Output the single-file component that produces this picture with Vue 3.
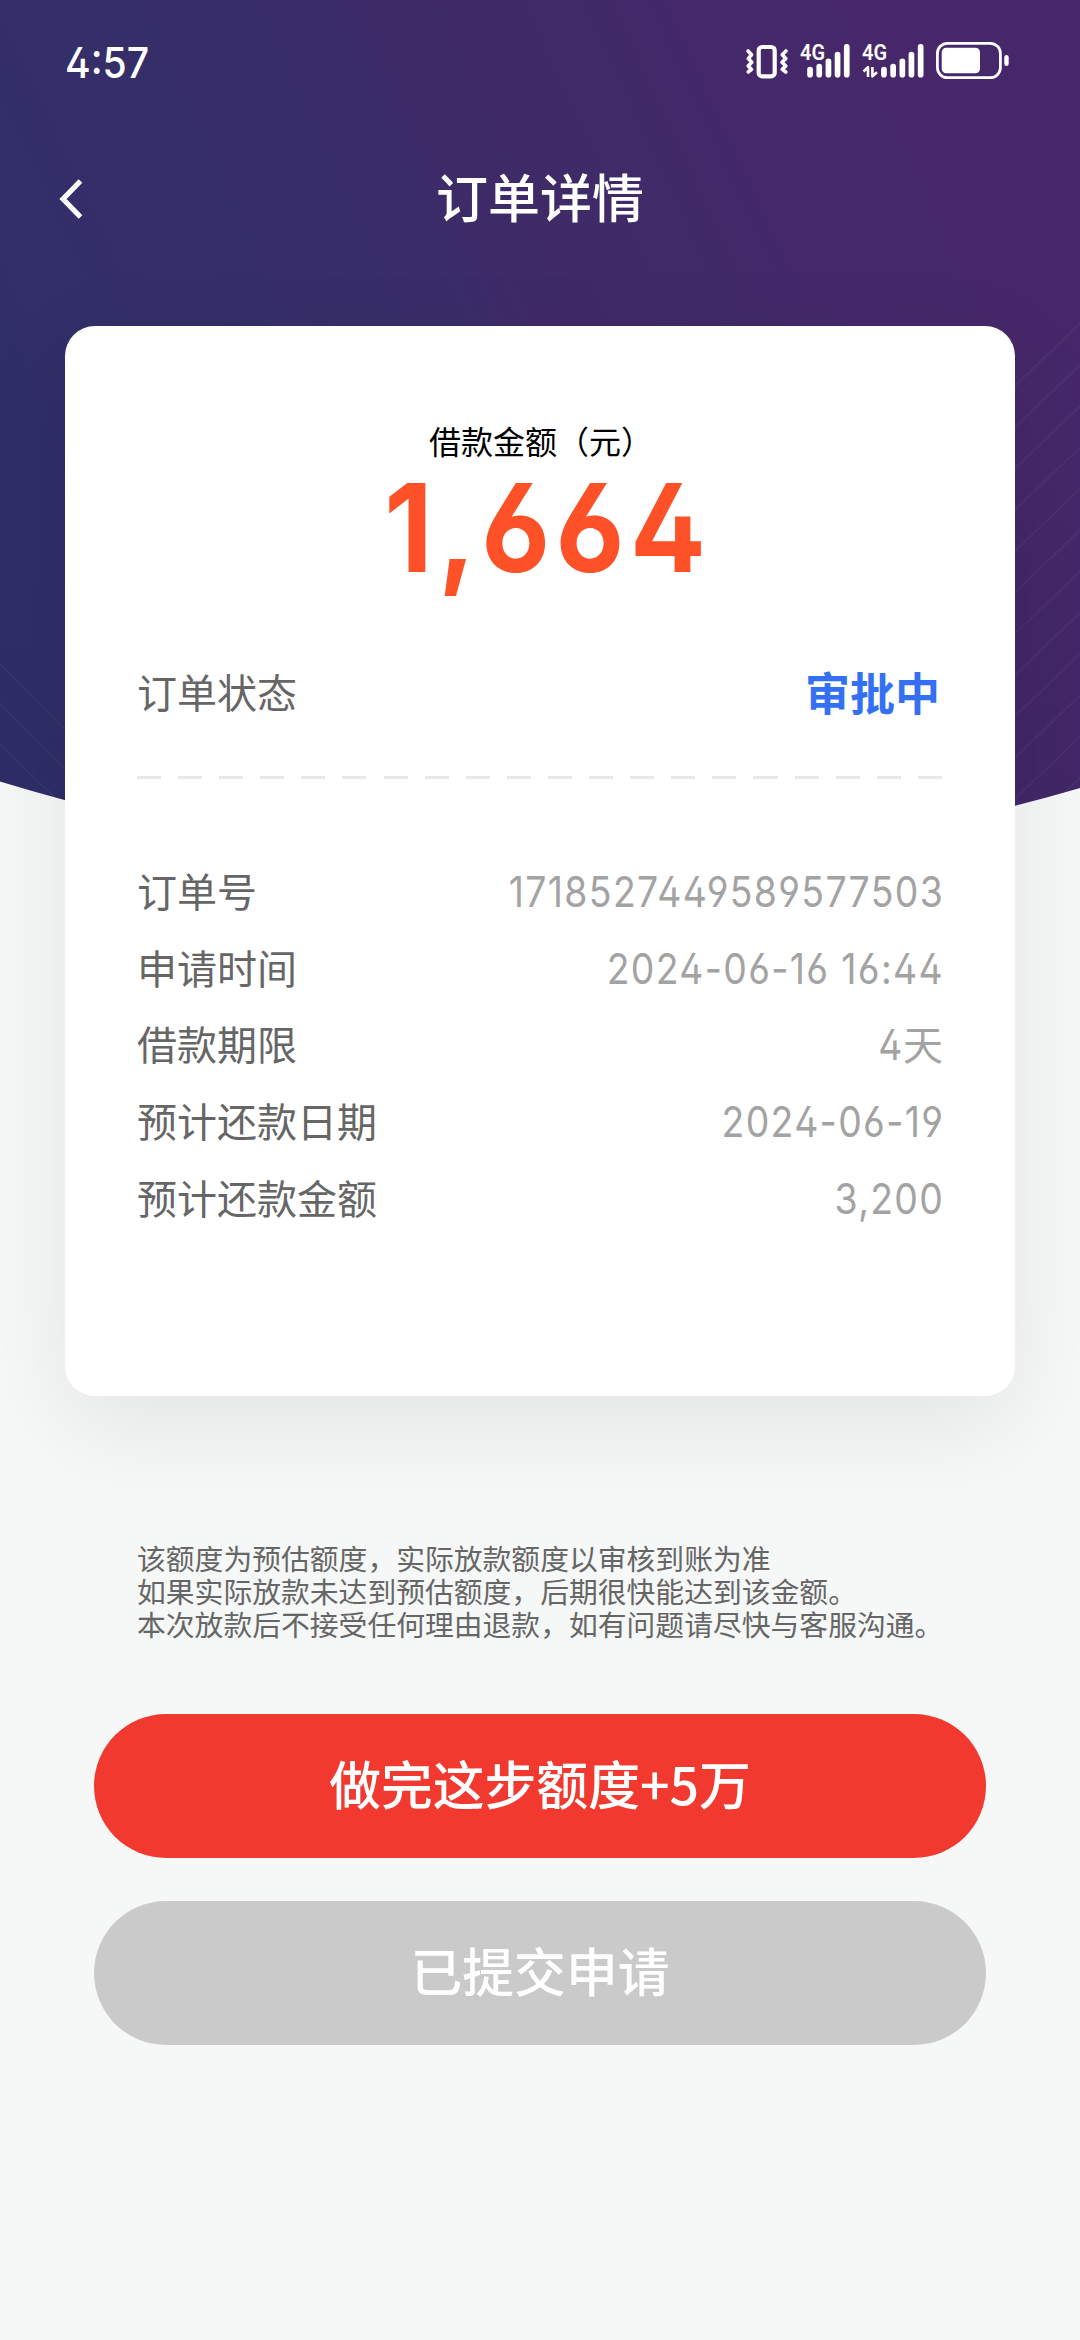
<script setup>
const details = [
  { label: '订单号', value: '1718527449589577503' },
  { label: '申请时间', value: '2024-06-16 16:44' },
  { label: '借款期限', value: '4', unit: '天' },
  { label: '预计还款日期', value: '2024-06-19' },
  { label: '预计还款金额', value: '3,200' },
]

const notices = [
  '该额度为预估额度，实际放款额度以审核到账为准',
  '如果实际放款未达到预估额度，后期很快能达到该金额。',
  '本次放款后不接受任何理由退款，如有问题请尽快与客服沟通。',
]

const stripes = Array.from({ length: 12 }, (_, i) => 386 + i * 41.3)
const bars = [
  { x: 0, y: 46.7 },
  { x: 9.2, y: 43.7 },
  { x: 18.4, y: 38.4 },
  { x: 27.5, y: 31.7 },
  { x: 36.7, y: 24 },
]
</script>

<template>
  <div class="page">
    <svg class="backdrop" viewBox="0 0 1080 880" aria-hidden="true">
      <defs>
        <linearGradient id="sky" gradientUnits="userSpaceOnUse" x1="60" y1="560" x2="960" y2="140">
          <stop offset="0" stop-color="#302f69" />
          <stop offset="0.47" stop-color="#392d69" />
          <stop offset="0.54" stop-color="#3f2a68" />
          <stop offset="0.7" stop-color="#402a68" />
          <stop offset="0.82" stop-color="#45286a" />
          <stop offset="1" stop-color="#46286a" />
        </linearGradient>
        <linearGradient id="shade" x1="0" y1="0" x2="0" y2="1">
          <stop offset="0.35" stop-color="#201850" stop-opacity="0" />
          <stop offset="1" stop-color="#201850" stop-opacity="0.1" />
        </linearGradient>
        <clipPath id="dome"><path d="M0 0H1080V788Q540 946 0 781.5Z" /></clipPath>
      </defs>
      <g clip-path="url(#dome)">
        <rect width="1080" height="880" fill="url(#sky)" />
        <rect width="1080" height="880" fill="url(#shade)" />
        <g fill="none" stroke="#fff" stroke-opacity="0.045" stroke-width="1.6">
          <path v-for="y in stripes" :key="y" :d="`M1005 ${y + 9.5}L1090 ${y - 72}`" />
          <path d="M0 664Q36 700 70 735M0 703Q36 742 70 773M0 743Q26 771 58 800" />
        </g>
      </g>
    </svg>

    <div class="statusbar">
      <span class="time num">4:57</span>
      <svg class="icons" width="280" height="80" viewBox="20 0 280 80" fill="#fff" aria-hidden="true">
        <rect x="38.7" y="27" width="16" height="29.4" rx="3.5" fill="none" stroke="#fff" stroke-width="4.2" />
        <g fill="none" stroke="#fff" stroke-width="3.6" stroke-linecap="round" stroke-linejoin="round">
          <path d="M28 31l3.6 3.8-3.4 3.8 3.6 3.7-3.6 3.7 3.4 3.4-3.4 2.6" />
          <path d="M66 31l-3.8 3.8 3.6 3.8-3.8 3.7 3.8 3.7-3.6 3.4 3.6 2.6" />
        </g>
        <text class="net" x="80" y="40.3" textLength="25" lengthAdjust="spacingAndGlyphs">4G</text>
        <rect v-for="b in bars" :key="'a' + b.x" :x="87.2 + b.x" :y="b.y" width="5.7" :height="57.5 - b.y" rx="2.8" />
        <text class="net" x="142" y="40.3" textLength="25" lengthAdjust="spacingAndGlyphs">4G</text>
        <rect v-for="b in bars" :key="'b' + b.x" :x="161.1 + b.x" :y="b.y" width="5.7" :height="57.5 - b.y" rx="2.8" />
        <path d="M143.5 51.5L148 47.2V57M157 52.2L152.4 56.3V47" fill="none" stroke="#fff" stroke-width="2.6" stroke-linejoin="round" />
        <rect x="217.4" y="23.4" width="63" height="34.2" rx="10" fill="none" stroke="#fff" stroke-width="2.8" />
        <rect x="221.7" y="27.7" width="38.3" height="25.6" rx="4.5" />
        <rect x="284.3" y="35" width="4.4" height="11" rx="2.2" />
      </svg>
    </div>

    <header class="navbar">
      <svg class="back" width="30" height="44" viewBox="0 0 30 44" fill="none" stroke="#fff" stroke-width="5.2">
        <path d="M24.5 4L7 22L24.5 40" />
      </svg>
      <h1>订单详情</h1>
    </header>

    <section class="card">
      <p class="caption">借款金额（元）</p>
      <p class="amount"><span class="num">1,664</span></p>
      <div class="row status">
        <span>订单状态</span>
        <strong>审批中</strong>
      </div>
      <div class="divider"></div>
      <div v-for="d in details" :key="d.label" class="row">
        <span>{{ d.label }}</span>
        <span class="value"><span class="num">{{ d.value }}</span>{{ d.unit }}</span>
      </div>
    </section>

    <div class="notice">
      <p v-for="n in notices" :key="n">{{ n }}</p>
    </div>

    <div class="actions">
      <button class="primary">做完这步额度+5万</button>
      <button class="disabled">已提交申请</button>
    </div>
  </div>
</template>

<style>
body {
  background: #f5f8f7;
}
</style>

<style scoped>
.page {
  position: relative;
  width: 1080px;
  height: 2340px;
  overflow: hidden;
  background: #f5f8f7;
  font-family: "Noto Sans CJK SC", "Noto Sans", sans-serif;
}
p,
h1 {
  margin: 0;
}
.backdrop {
  position: absolute;
  top: 0;
  left: 0;
  width: 1080px;
  height: 880px;
}
.num {
  display: inline-block;
  font-family: Inter, "Noto Sans", sans-serif;
  font-feature-settings: "cv02", "cv03", "cv04";
}
.statusbar {
  position: relative;
  display: flex;
  justify-content: space-between;
  align-items: center;
  height: 84px;
  padding: 20px 60px 20px 65px;
  color: #fff;
}
.time {
  font-size: 43px;
  font-weight: 500;
  line-height: 1;
  transform: scaleX(0.91);
  transform-origin: left;
}
.icons {
  margin-bottom: 4px;
}
.net {
  font: 600 22.5px Roboto, sans-serif;
}
.navbar {
  position: relative;
  display: flex;
  align-items: center;
  justify-content: center;
  height: 80px;
  margin-top: 34px;
  color: #fff;
}
.back {
  position: absolute;
  left: 56px;
  top: 19px;
}
h1 {
  margin-top: -5px;
  font-size: 52px;
  font-weight: 500;
  line-height: 80px;
}
.card {
  position: relative;
  box-sizing: border-box;
  width: 950px;
  height: 1070px;
  margin: 88px auto 0;
  padding: 91px 72px 0;
  border-radius: 30px;
  background: #fff;
  box-shadow: 0 30px 100px rgba(0, 0, 0, 0.08);
}
.caption {
  padding-left: 2px;
  font-size: 32px;
  line-height: 46px;
  text-align: center;
  color: #000;
}
.amount {
  height: 120px;
  padding-left: 15px;
  line-height: 112px;
  text-align: center;
  font-size: 122px;
  font-weight: 700;
  letter-spacing: 6px;
  color: #ff5128;
}
.amount .num {
  line-height: 112px;
  transform: scaleX(0.92);
}
.row {
  display: flex;
  align-items: center;
  justify-content: space-between;
  height: 76.6px;
  font-size: 40px;
  color: #666;
}
.status {
  height: 80px;
  margin-top: 68px;
}
.status strong {
  margin-right: 3px;
  font-size: 45px;
  font-weight: 700;
  color: #3370f4;
}
.divider {
  height: 3px;
  margin: 45px 0 73px;
  background: repeating-linear-gradient(90deg, #e8e8e8 0 24px, transparent 24px 41.1px);
}
.value {
  color: #a3a3a3;
  white-space: nowrap;
}
.value .num {
  margin-right: -1px;
  font-size: 42px;
  letter-spacing: 1.5px;
  transform: scaleX(0.89);
  transform-origin: right;
}
.notice {
  position: relative;
  margin: 145px 0 0 137px;
  font-size: 28.8px;
  line-height: 33.2px;
  color: #666;
  white-space: nowrap;
}
.actions {
  position: relative;
  display: flex;
  flex-direction: column;
  gap: 43px;
  margin: 73px 94px 0;
}
button {
  height: 144px;
  padding: 0 0 7px;
  border: 0;
  border-radius: 72px;
  font: 500 51.8px/137px "Noto Sans CJK SC", sans-serif;
  color: #fff;
}
.primary {
  background: #f2392f;
}
.disabled {
  background: #cacaca;
}
</style>
